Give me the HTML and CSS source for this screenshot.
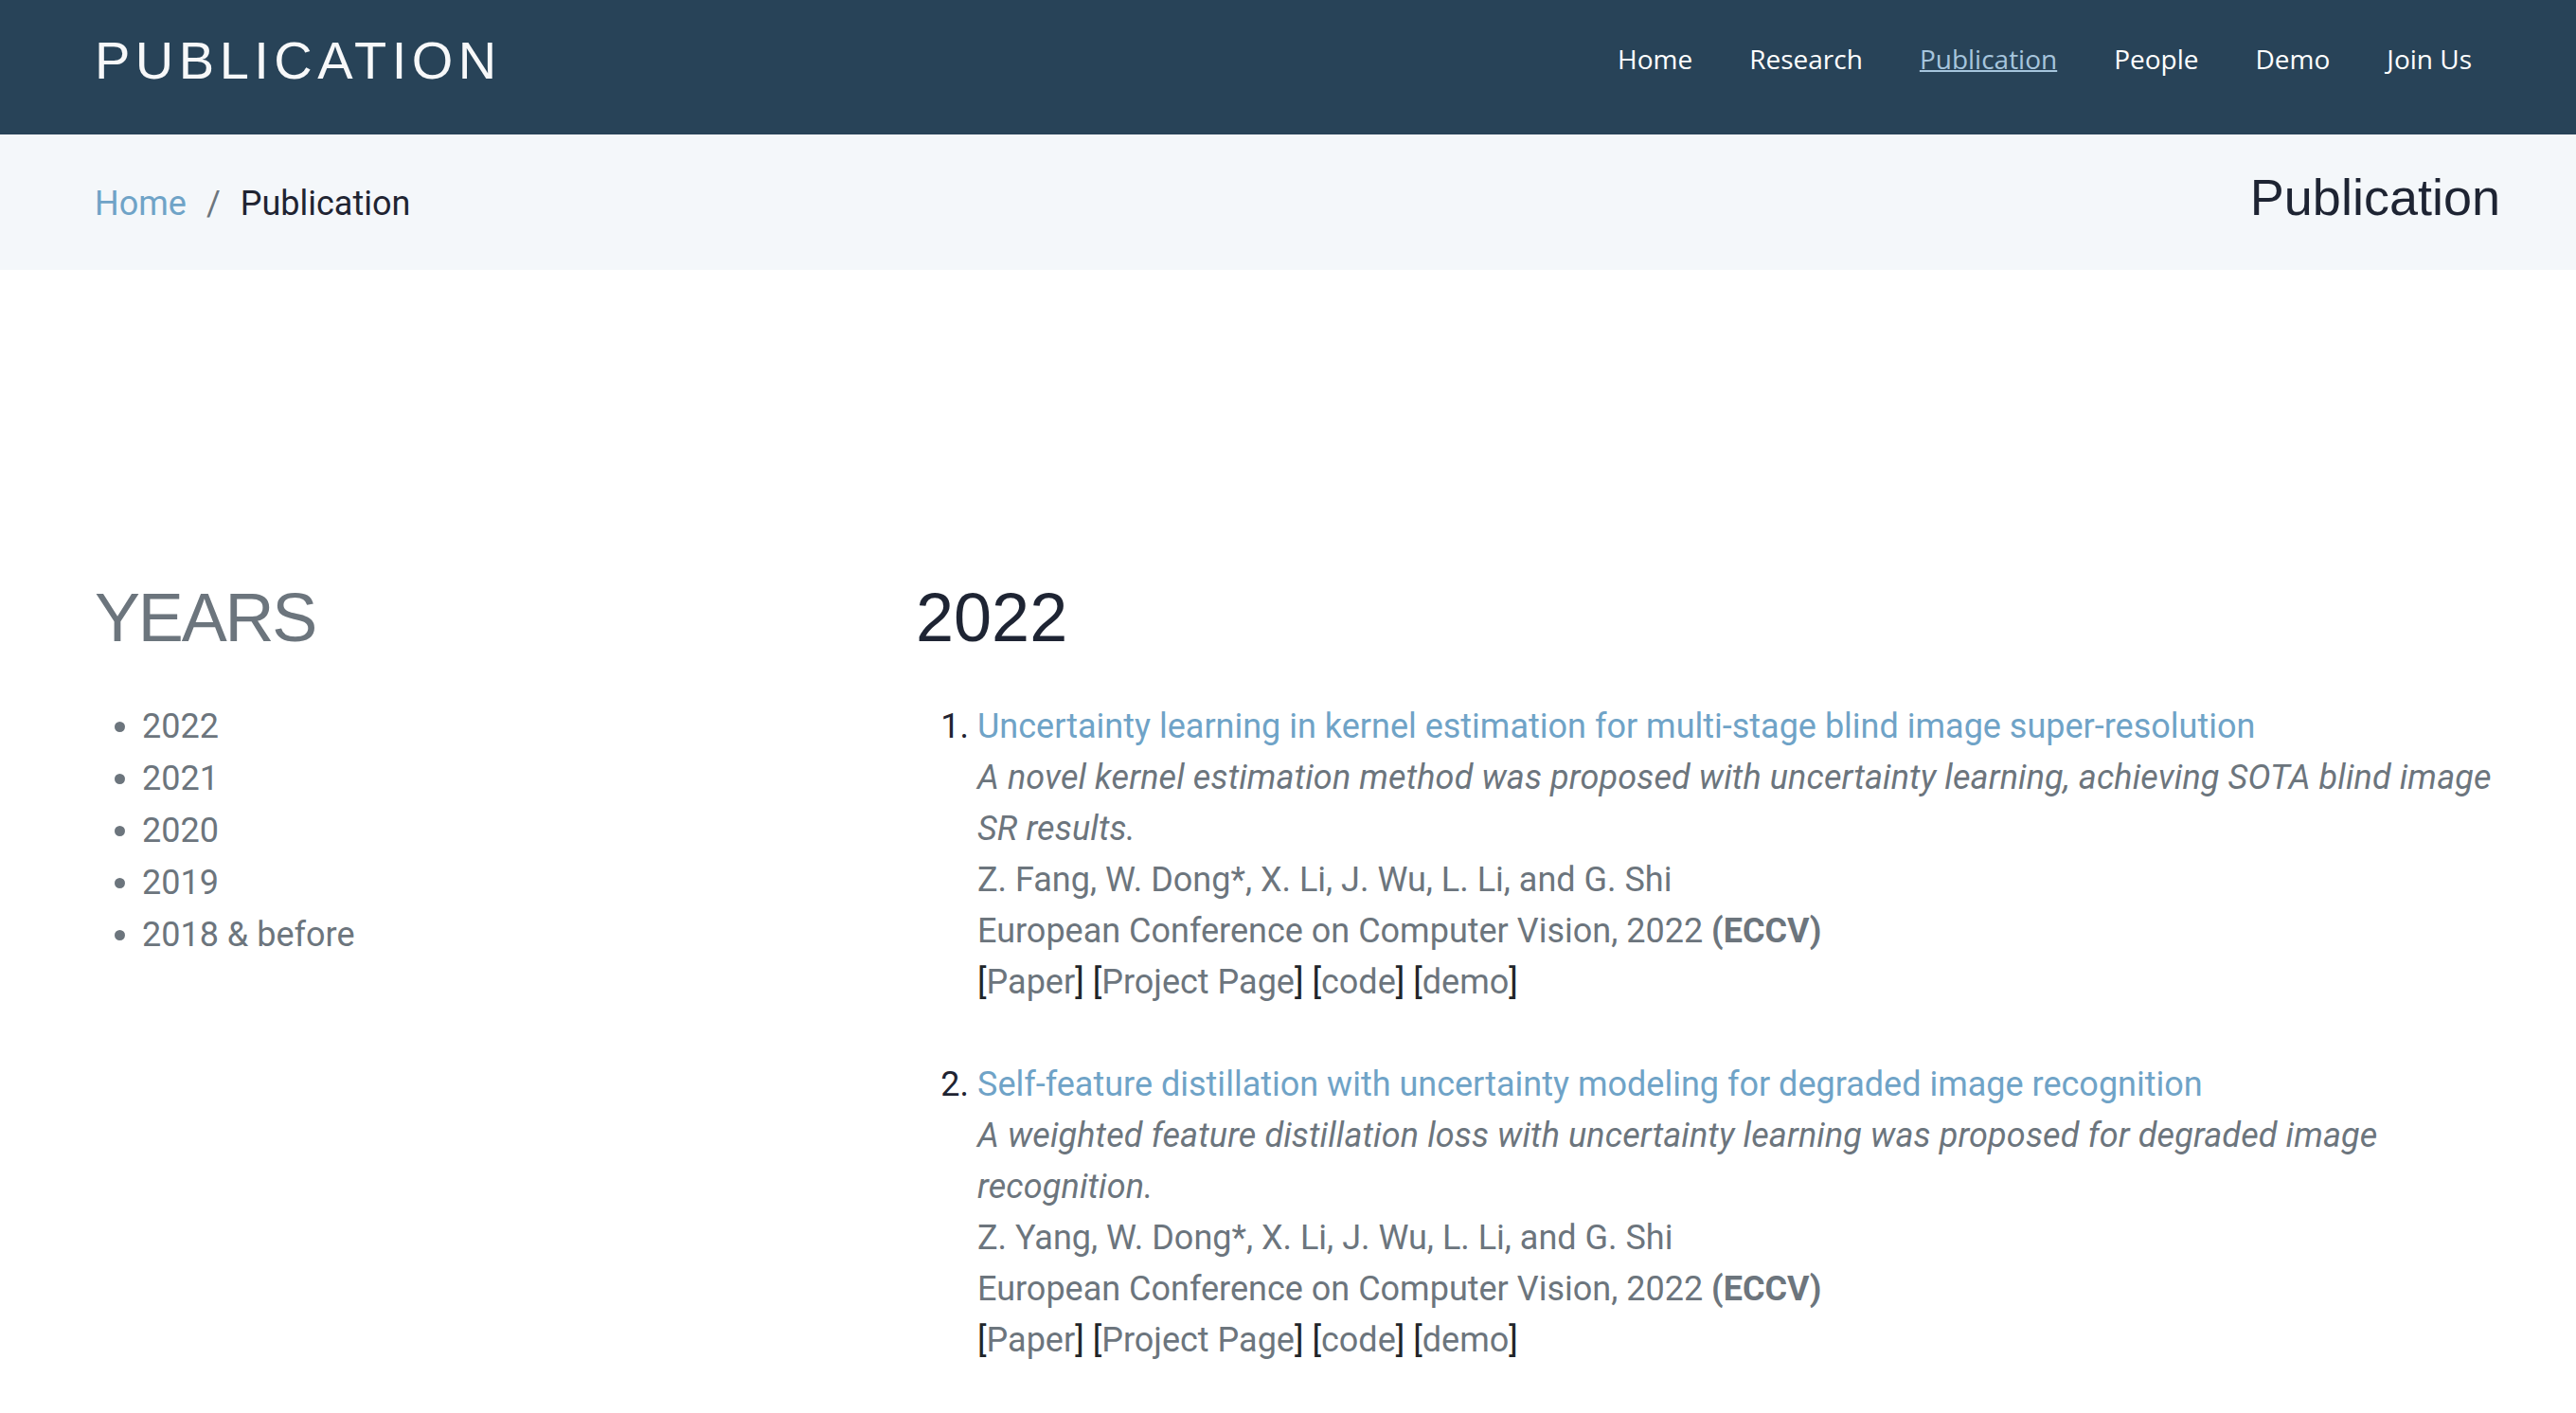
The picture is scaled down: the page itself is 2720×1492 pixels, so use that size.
FILE: index.html
```html
<!DOCTYPE html>
<html lang="en">
<head>
<meta charset="utf-8">
<title>Publication</title>
<link rel="stylesheet" href="styles.css">
</head>
<body>
<header class="navbar">
  <div class="brand">PUBLICATION</div>
  <ul class="nav-links">
    <li><a href="#">Home</a></li>
    <li><a href="#">Research</a></li>
    <li><a href="#" class="active">Publication</a></li>
    <li><a href="#">People</a></li>
    <li><a href="#">Demo</a></li>
    <li><a href="#">Join Us</a></li>
  </ul>
</header>

<section class="crumbs">
  <ol class="breadcrumb">
    <li><a href="#">Home</a></li>
    <li class="sep">/</li>
    <li class="current">Publication</li>
  </ol>
  <h1 class="page-title">Publication</h1>
</section>

<main class="content">
  <aside class="years">
    <h2>YEARS</h2>
    <ul>
      <li><a href="#">2022</a></li>
      <li><a href="#">2021</a></li>
      <li><a href="#">2020</a></li>
      <li><a href="#">2019</a></li>
      <li><a href="#">2018 &amp; before</a></li>
    </ul>
  </aside>
  <section class="pubs">
    <h2>2022</h2>
    <ol>
      <li class="pub">
        <div class="pub-title"><a href="#">Uncertainty learning in kernel estimation for multi-stage blind image super-resolution</a></div>
        <div class="desc">A novel kernel estimation method was proposed with uncertainty learning, achieving SOTA blind image SR results.</div>
        <div class="meta">Z. Fang, W. Dong*, X. Li, J. Wu, L. Li, and G. Shi</div>
        <div class="meta">European Conference on Computer Vision, 2022 <b>(ECCV)</b></div>
        <div class="links">[<a href="#">Paper</a>] [<a href="#">Project Page</a>] [<a href="#">code</a>] [<a href="#">demo</a>]</div>
      </li>
      <li class="pub">
        <div class="pub-title"><a href="#">Self-feature distillation with uncertainty modeling for degraded image recognition</a></div>
        <div class="desc">A weighted feature distillation loss with uncertainty learning was proposed for degraded image recognition.</div>
        <div class="meta">Z. Yang, W. Dong*, X. Li, J. Wu, L. Li, and G. Shi</div>
        <div class="meta">European Conference on Computer Vision, 2022 <b>(ECCV)</b></div>
        <div class="links">[<a href="#">Paper</a>] [<a href="#">Project Page</a>] [<a href="#">code</a>] [<a href="#">demo</a>]</div>
      </li>
    </ol>
  </section>
</main>
</body>
</html>
```

FILE: styles.css
```css
body {
  margin: 0;
  font-family: Roboto, "Liberation Sans", sans-serif;
  color: #1f2432;
  background: #ffffff;
}

.navbar {
  display: flex;
  justify-content: space-between;
  align-items: flex-start;
  height: 142px;
  box-sizing: border-box;
  padding: 0 80px 0 100px;
  background: #284358;
}

.brand {
  margin-top: 31px;
  font-family: "Liberation Sans", Arial, sans-serif;
  font-size: 56px;
  line-height: 66px;
  letter-spacing: 5.5px;
  color: #f7f8f9;
}

.nav-links {
  display: flex;
  list-style: none;
  margin: 43px 0 0;
  padding: 0;
  font-family: "Open Sans", sans-serif;
  font-size: 28px;
  line-height: 38px;
}

.nav-links a {
  display: block;
  padding: 0 30px;
  color: #ffffff;
  text-decoration: none;
}

.nav-links a.active {
  color: #a6c5dd;
  text-decoration: underline;
  text-decoration-thickness: 2px;
}

.crumbs {
  display: flex;
  justify-content: space-between;
  align-items: baseline;
  height: 143px;
  box-sizing: border-box;
  padding: 34px 80px 0 100px;
  background: #f4f7fa;
}

.breadcrumb {
  display: flex;
  list-style: none;
  margin: 0;
  padding: 0;
  font-size: 36px;
}

.breadcrumb a {
  color: #6fa3c7;
  text-decoration: none;
}

.breadcrumb .sep {
  padding: 0 21px;
  color: #6c757d;
}

.breadcrumb .current {
  color: #1f2432;
}

.page-title {
  margin: 0;
  font-family: "Liberation Sans", Arial, sans-serif;
  font-weight: normal;
  font-size: 54px;
  line-height: 64px;
  color: #1e2433;
}

.content {
  display: grid;
  grid-template-columns: 867px 1fr;
  padding: 324px 80px 0 100px;
}

.content h2 {
  margin: 0 0 45px;
  font-family: "Liberation Sans", Arial, sans-serif;
  font-weight: normal;
  line-height: 86px;
}

.years h2 {
  font-size: 72px;
  letter-spacing: -2.2px;
  color: #6c757d;
}

.pubs h2 {
  font-size: 72px;
  color: #1e2433;
}

.years ul {
  margin: 2px 0 0;
  padding-left: 50px;
  font-size: 36px;
  line-height: 55px;
  color: #6c757d;
}

.years a {
  color: #6c757d;
  text-decoration: none;
}

.pubs ol {
  margin: 0;
  padding-left: 65px;
  font-size: 36px;
  line-height: 54px;
  color: #1f2432;
}

.pub + .pub {
  margin-top: 54px;
}

.pub-title a {
  color: #6fa3c7;
  text-decoration: none;
}

.desc {
  font-style: italic;
  letter-spacing: 0.13px;
  color: #6c757d;
}

.meta {
  color: #6c757d;
}

.links {
  color: #212529;
}

.links a {
  color: #6c757d;
  text-decoration: none;
}
```
